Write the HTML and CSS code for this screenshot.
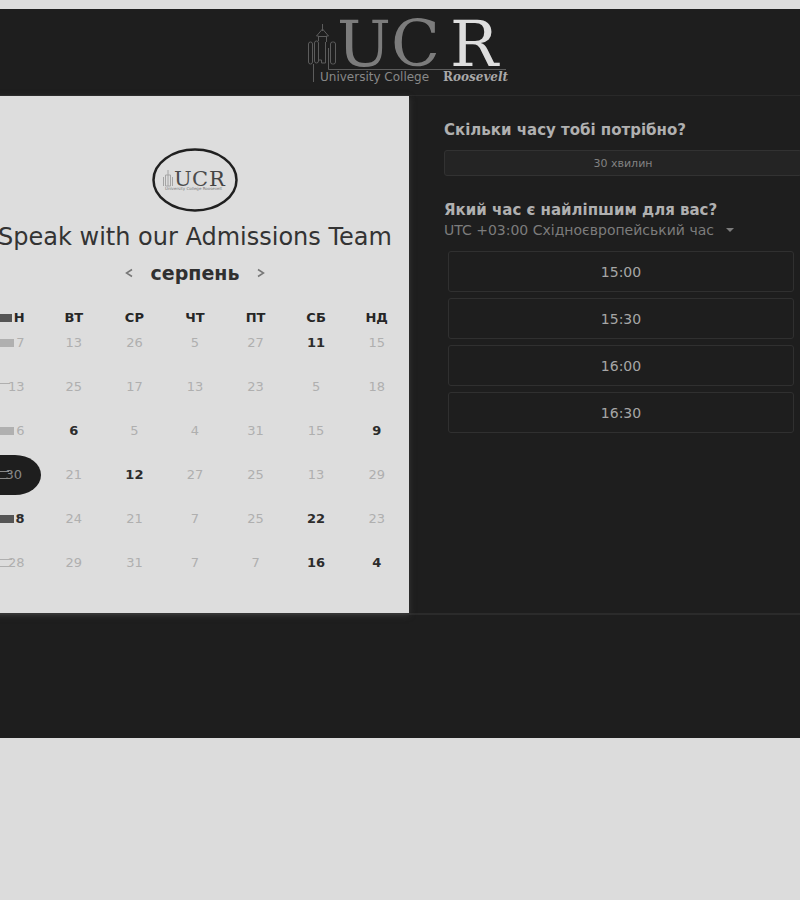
FILE: index.html
```html
<!DOCTYPE html>
<html lang="uk">
<head>
<meta charset="utf-8">
<meta name="viewport" content="width=device-width, initial-scale=1">
<title>Speak with our Admissions Team</title>
<link rel="stylesheet" href="styles.css">
</head>
<body>
<div class="app">
  <header class="header">
    <svg class="logo" viewBox="0 0 204 64" role="img" aria-label="University College Roosevelt">
      <g fill="none" stroke="#5c5c5c" stroke-width="1">
        <path d="M16.500 4v7M16.500 9l-6 7h2v5M16.500 9l6 7h-2v6M12 16.500h9"/>
        <rect x="2.500" y="22" width="4" height="22" rx="2"/>
        <rect x="8.500" y="21" width="4" height="22" rx="2"/>
        <path d="M12.500 40h3v3h4V22"/>
        <rect x="24.500" y="22" width="5" height="22" rx="2"/>
        <path d="M7.500 44v18M22.500 28v21.500H200"/>
      </g>
      <g class="logo-letters">
        <text x="31" y="46" fill="#7c7c7c">U</text>
        <text x="85" y="46" fill="#7c7c7c">C</text>
        <text x="144" y="46" fill="#dedede">R</text>
      </g>
      <text class="logo-line" x="14" y="61" fill="#888">University College</text>
      <text class="logo-name" x="137" y="61" fill="#a8a8a8">R<tspan font-style="italic">oosevelt</tspan></text>
    </svg>
  </header>

  <main class="booking">
    <section class="calendar">
      <svg class="badge" viewBox="0 0 86 64" aria-hidden="true">
        <ellipse cx="43" cy="32" rx="41.500" ry="30.500" fill="none" stroke="#202020" stroke-width="2.500"/>
        <path d="M16 22v5M13.500 27h5v11h-5zM11.500 29v9M20.500 29v9M16 27v11" fill="none" stroke="#a4a4a4"/>
        <g class="badge-letters">
          <text x="22" y="38" fill="#4c4c4c">U</text>
          <text x="40" y="38" fill="#4c4c4c">C</text>
          <text x="57" y="38" fill="#444">R</text>
        </g>
        <text class="badge-line" x="13" y="42" fill="#777">University College Roosevelt</text>
      </svg>
      <h1 class="title">Speak with our Admissions Team</h1>
      <div class="month">
        <button class="arrow" type="button" aria-label="Попередній місяць"><svg viewBox="0 0 8 10"><path d="M7 1.500L1.500 5 7 8.500"/></svg></button>
        <h2 class="month-name">серпень</h2>
        <button class="arrow" type="button" aria-label="Наступний місяць"><svg viewBox="0 0 8 10"><path d="M1 1.500L6.500 5 1 8.500"/></svg></button>
      </div>
      <table class="days">
        <thead>
          <tr><th><i class="smear dark"></i>Н</th><th>ВТ</th><th>СР</th><th>ЧТ</th><th>ПТ</th><th>СБ</th><th>НД</th></tr>
        </thead>
        <tbody>
          <tr><td><button type="button" disabled><i class="smear"></i>7</button></td><td><button type="button" disabled>13</button></td><td><button type="button" disabled>26</button></td><td><button type="button" disabled>5</button></td><td><button type="button" disabled>27</button></td><td><button type="button">11</button></td><td><button type="button" disabled>15</button></td></tr>
          <tr><td><button type="button" disabled><i class="smear top"></i>13</button></td><td><button type="button" disabled>25</button></td><td><button type="button" disabled>17</button></td><td><button type="button" disabled>13</button></td><td><button type="button" disabled>23</button></td><td><button type="button" disabled>5</button></td><td><button type="button" disabled>18</button></td></tr>
          <tr><td><button type="button" disabled><i class="smear"></i>6</button></td><td><button type="button">6</button></td><td><button type="button" disabled>5</button></td><td><button type="button" disabled>4</button></td><td><button type="button" disabled>31</button></td><td><button type="button" disabled>15</button></td><td><button type="button">9</button></td></tr>
          <tr><td><button class="selected" type="button" aria-pressed="true"><i class="smear lines"></i>30</button></td><td><button type="button" disabled>21</button></td><td><button type="button">12</button></td><td><button type="button" disabled>27</button></td><td><button type="button" disabled>25</button></td><td><button type="button" disabled>13</button></td><td><button type="button" disabled>29</button></td></tr>
          <tr><td><button type="button"><i class="smear dark"></i>8</button></td><td><button type="button" disabled>24</button></td><td><button type="button" disabled>21</button></td><td><button type="button" disabled>7</button></td><td><button type="button" disabled>25</button></td><td><button type="button">22</button></td><td><button type="button" disabled>23</button></td></tr>
          <tr><td><button type="button" disabled><i class="smear lines"></i>28</button></td><td><button type="button" disabled>29</button></td><td><button type="button" disabled>31</button></td><td><button type="button" disabled>7</button></td><td><button type="button" disabled>7</button></td><td><button type="button">16</button></td><td><button type="button">4</button></td></tr>
        </tbody>
      </table>
    </section>

    <section class="options">
      <h2 class="question">Скільки часу тобі потрібно?</h2>
      <button class="duration" type="button">30 хвилин</button>
      <h2 class="question">Який час є найліпшим для вас?</h2>
      <div class="zone">
        <select aria-label="Часовий пояс"><option>UTC +03:00 Східноєвропейський час</option></select>
        <svg viewBox="0 0 8 4" aria-hidden="true"><path d="M0 0h8L4 4z"/></svg>
      </div>
      <div class="slots">
        <button type="button">15:00</button>
        <button type="button">15:30</button>
        <button type="button">16:00</button>
        <button type="button">16:30</button>
      </div>
    </section>
  </main>
</div>
</body>
</html>
```
FILE: styles.css
```css
* { box-sizing: border-box; }

body {
  margin: 0;
  padding-top: 9px;
  background: #dcdcdc;
  color: #2c2c2c;
  font-family: "DejaVu Sans", sans-serif;
  font-size: 13px;
  overflow-x: hidden;
}

h1, h2 { margin: 0; }

button, select {
  margin: 0;
  padding: 0;
  border: 0;
  background: none;
  color: inherit;
  font: inherit;
}

.app {
  background: #1e1e1e;
  padding-bottom: 123px;
  overflow: hidden;
}

.header {
  display: flex;
  justify-content: center;
  padding: 11px 0;
  border-bottom: 1px solid #292929;
}

.logo { width: 204px; height: 64px; margin-left: 16px; overflow: visible; }
.logo-letters { font: 64px "DejaVu Serif", serif; }
.logo-line { font-size: 12px; }
.logo-name { font: bold 12px "DejaVu Serif", serif; }

.booking {
  display: grid;
  grid-template-columns: minmax(0, 409fr) minmax(0, 391fr);
  border-bottom: 2px solid #2b2b2b;
}

.calendar {
  display: flex;
  flex-direction: column;
  align-items: center;
  margin-left: -19px;
  padding: 52px 2px 28px;
  background: #dddddd;
  box-shadow: 0 2px 6px #3c3c3c;
}

.badge { width: 86px; height: 64px; }
.badge-letters { font: 21px "DejaVu Serif", serif; }
.badge-line { font-size: 4px; }

.title {
  margin-top: 11px;
  font-size: 24px;
  font-weight: 400;
  line-height: 28px;
  white-space: nowrap;
  color: #333;
}

.month {
  display: flex;
  align-items: center;
  gap: 18px;
  margin-top: 8px;
}

.month-name { font-size: 19px; line-height: 28px; color: #303030; }
.arrow { display: flex; }
.arrow svg { width: 8px; height: 10px; fill: none; stroke: #777; stroke-width: 1.500; }

.days {
  width: 100%;
  margin-top: 21px;
  border-collapse: collapse;
  table-layout: fixed;
}

.days th { height: 20px; padding: 0; line-height: 20px; color: #262626; }
.days td { height: 44px; padding: 0; }
.days tbody tr:first-child td { height: 37px; vertical-align: top; }
.days tbody tr:first-child button { height: 30px; }

.days button {
  display: block;
  width: 100%;
  height: 40px;
  line-height: 20px;
  font-weight: 700;
}

.days button:disabled { color: #afafaf; font-weight: 400; }

.days th:first-child,
.days td:first-child button { text-align: right; padding-right: 19px; }

.days button.selected {
  width: 58px;
  padding-right: 17px;
  border-radius: 0 26px 26px 0 / 0 20px 20px 0;
  background: #1e1e1e;
  color: #8a8a8a;
  font-weight: 400;
}

.smear {
  display: inline-block;
  width: 14px;
  height: 8px;
  margin-right: 2px;
  background: #b0b0b0;
}

.smear.dark { background: #555; }
.smear.top { margin-right: -2px; background: none; border-top: 1px solid #afafaf; }
.smear.lines { margin-right: -4px; background: none; border: solid currentColor; border-width: 1px 0; }

.options {
  padding: 24px 0 0 35px;
  color: #b0b0b0;
}

.question { font-size: 15px; line-height: 20px; white-space: nowrap; }

.duration {
  display: block;
  width: calc(100% + 2px);
  height: 26px;
  margin: 10px 0 24px;
  border: 1px solid #323232;
  border-radius: 3px;
  background: #242424;
  color: #828282;
  font-size: 11px;
}

.zone {
  display: flex;
  align-items: center;
  gap: 12px;
  height: 20px;
  color: #7c7c7c;
  font-size: 14px;
}

.zone select { appearance: none; }
.zone svg { width: 8px; height: 4px; fill: currentColor; }

.slots {
  display: grid;
  gap: 6px;
  margin: 11px 6px 0 4px;
}

.slots button {
  height: 41px;
  border: 1px solid #303030;
  border-radius: 3px;
  color: #a6a6a6;
  font-size: 14px;
}
```
